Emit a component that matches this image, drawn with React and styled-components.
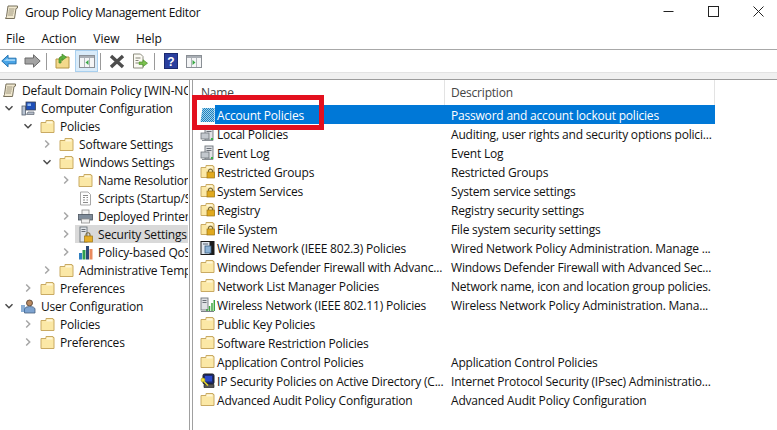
import React from 'react';
import styled, { createGlobalStyle } from 'styled-components';

const GlobalStyle = createGlobalStyle`
  html, body {
    margin: 0;
    padding: 0;
    background: #fff;
    overflow: hidden;
  }
  body {
    font-family: "Open Sans", "Noto Sans", sans-serif;
    font-size: 12px;
    color: #111;
  }
`;

const Window = styled.div`
  position: relative;
  width: 777px;
  height: 430px;
  display: flex;
  flex-direction: column;
  background: #fff;
  overflow: hidden;
`;

const TitleBar = styled.div`
  height: 25px;
  display: flex;
  align-items: center;
  padding-left: 4px;
  margin-right: -4px;
  gap: 6px;
`;

const Title = styled.span`
  font-size: 12px;
  letter-spacing: -0.32px;
  color: #111;
  flex: 1;
`;

const WindowControls = styled.div`
  display: flex;
  align-self: flex-start;
`;

const WindowControl = styled.div`
  width: 45px;
  height: 22px;
  display: flex;
  align-items: center;
  justify-content: center;
`;

const MenuBar = styled.div`
  height: 22px;
  padding-top: 2px;
  display: flex;
  align-items: center;
  padding-left: 6px;
  gap: 16.5px;
  border-bottom: 1px solid #a8a8a8;
  box-sizing: content-box;
`;

const MenuItem = styled.span`
  font-size: 12px;
  color: #111;
`;

const Toolbar = styled.div`
  height: 22px;
  display: flex;
  align-items: center;
`;

const ToolButton = styled.div`
  width: ${p => p.$w || 23}px;
  height: 22px;
  display: flex;
  align-items: center;
  justify-content: center;
  box-sizing: border-box;
  flex-shrink: 0;
  margin-left: ${p => p.$ml || 0}px;
  background: ${p => (p.$active ? '#d9ebf9' : 'transparent')};
  border: 1px solid ${p => (p.$active ? '#a9d0ef' : 'transparent')};
`;

const ToolSeparator = styled.div`
  width: 1px;
  height: 17px;
  background: #9a9a9a;
  flex-shrink: 0;
  margin-left: ${p => p.$ml || 0}px;
`;

const Band = styled.div`
  height: 6px;
  background: #f0f0f0;
  border-top: 1px solid #e3e3e3;
  border-bottom: 1px solid #9c9c9c;
  box-sizing: content-box;
`;

const Panes = styled.div`
  flex: 1;
  display: flex;
  min-height: 0;
`;

const TreePane = styled.div`
  width: 189px;
  flex-shrink: 0;
  border-right: 1px solid #a0a0a0;
  padding-top: 1px;
  overflow: hidden;
  box-sizing: content-box;
`;

const TreeRow = styled.div`
  height: 18px;
  display: flex;
  align-items: center;
  white-space: nowrap;
  width: 188px;
`;

const TreeIndent = styled.div`
  width: ${p => p.$level * 19 + 2}px;
  flex-shrink: 0;
  display: flex;
  justify-content: flex-end;
  align-items: center;
  padding-right: ${p => (p.$level > 0 ? 7 : 0)}px;
  box-sizing: border-box;
`;

const TreeLabel = styled.div`
  display: flex;
  align-items: center;
  gap: 5px;
  height: 18px;
  flex: 1;
  min-width: 0;
  margin-left: -3px;
  padding-left: 3px;
  background: ${p => (p.$selected ? '#d9d9d9' : 'transparent')};
  overflow: hidden;
`;

const TreeText = styled.span`
  font-size: 12px;
  letter-spacing: -0.2px;
  color: #111;
`;

const ListPane = styled.div`
  flex: 1;
  margin-left: 2px;
  border-left: 1px solid #a0a0a0;
  display: flex;
  flex-direction: column;
`;

const ListHeader = styled.div`
  height: 25px;
  display: grid;
  grid-template-columns: 252px 270px;
`;

const HeaderCell = styled.div`
  display: flex;
  align-items: center;
  padding-left: ${p => p.$pad}px;
  border-right: 1px solid #e3e3e3;
  font-size: 12px;
  letter-spacing: -0.2px;
  color: #444;
`;

const ListRow = styled.div`
  height: 19px;
  display: grid;
  grid-template-columns: 22px 230px 270px;
  align-items: center;
  white-space: nowrap;
`;

const IconCell = styled.div`
  height: 19px;
  display: flex;
  align-items: center;
  padding-left: 7px;
`;

const NameCell = styled.div`
  height: 19px;
  line-height: 21px;
  overflow: hidden;
  padding-left: 2px;
  font-size: 12px;
  letter-spacing: -0.2px;
  color: ${p => (p.$selected ? '#fff' : '#111')};
  background: ${p => (p.$selected ? '#0078d7' : 'transparent')};
`;

const DescCell = styled(NameCell)`
  padding-left: 6px;
  width: 270px;
  box-sizing: border-box;
`;

const Highlight = styled.div`
  position: absolute;
  left: 192px;
  top: 95px;
  width: 132px;
  height: 35px;
  box-sizing: border-box;
  border: 5px solid #e3101e;
  pointer-events: none;
`;

const Chevron = ({ open }) => (
  <svg width="10" height="10" viewBox="0 0 10 10">
    <path
      d={open ? 'M1.5 3.2 L5 6.7 L8.5 3.2' : 'M3.2 1.5 L6.7 5 L3.2 8.5'}
      fill="none"
      stroke={open ? '#4a4a4a' : '#a6a6a6'}
      strokeWidth="1.5"
    />
  </svg>
);

const Folder = ({ lock }) => (
  <svg width="15" height="15" viewBox="0 0 15 15" style={{ flexShrink: 0 }}>
    <path d="M1 3.5 H6 V1.5 H13 V2.5 H14 V13.5 H1 Z" fill="#fbe8a6" stroke="#c9aa63" strokeWidth="1" />
    <path d="M6.5 2.5 H12.5 V4.5 H6.5 Z" fill="#fff7d8" />
    {lock && (
      <g>
        <path d="M8.5 8 V6.5 A2.2 2.2 0 0 1 12.5 6.5 V8" fill="none" stroke="#7a6a3c" strokeWidth="1.2" />
        <rect x="7" y="8" width="7.5" height="6" fill="#e0a91e" stroke="#9a7414" strokeWidth="0.7" />
      </g>
    )}
  </svg>
);

const Scroll = () => (
  <svg width="15" height="15" viewBox="0 0 15 15" style={{ flexShrink: 0 }}>
    <path d="M4 1 H13.5 V3 L12 3.5 L10.5 13.5 H1.5 L2.5 11.5 Z" fill="#f0e8cf" stroke="#77705c" strokeWidth="1" />
    <path d="M5 4 H10.5 M4.6 6 H10 M4.3 8 H9.6 M4 10 H9" stroke="#8d866f" strokeWidth="0.8" />
  </svg>
);

const Computer = () => (
  <svg width="15" height="15" viewBox="0 0 15 15" style={{ flexShrink: 0 }}>
    <rect x="1" y="5" width="3.5" height="9" fill="#b9c4d2" stroke="#55606e" strokeWidth="0.8" />
    <rect x="5" y="1" width="9.5" height="8" fill="#1e4fb8" stroke="#3a4250" strokeWidth="0.8" />
    <rect x="6.5" y="2.5" width="3.5" height="2.5" fill="#8fb8f0" />
    <path d="M7 11 H13 V13.5 H5.5 Z" fill="#b4bcc8" stroke="#5c6470" strokeWidth="0.7" />
  </svg>
);

const User = () => (
  <svg width="15" height="15" viewBox="0 0 15 15" style={{ flexShrink: 0 }}>
    <circle cx="8.5" cy="4" r="3" fill="#b98a62" stroke="#4c3a2c" strokeWidth="0.8" />
    <path d="M3.5 14 V10 Q4 7.5 8.5 7.5 Q13.5 7.5 14 10 V14 Z" fill="#7da3d0" stroke="#46607f" strokeWidth="0.8" />
    <path d="M1 6 V13 M3 6 V13" stroke="#3f79b8" strokeWidth="1.2" />
  </svg>
);

const ScriptDoc = () => (
  <svg width="15" height="15" viewBox="0 0 15 15" style={{ flexShrink: 0 }}>
    <path d="M2.5 1 H10 L12.5 3.5 V14 H2.5 Z" fill="#fdfdfd" stroke="#a7a7a7" strokeWidth="1" />
    <path d="M5 4.5 H10 M5 6.5 H7 M8.5 6.5 H10 M5 9 H7 M8.5 9 H10 M5 11.5 H10" stroke="#7d7d7d" strokeWidth="0.9" />
  </svg>
);

const Printer = () => (
  <svg width="15" height="15" viewBox="0 0 15 15" style={{ flexShrink: 0 }}>
    <rect x="4" y="1" width="7" height="5" fill="#f4f4f4" stroke="#8c8c8c" strokeWidth="0.8" />
    <rect x="0.5" y="5.5" width="14" height="5.5" fill="#7f8c9a" stroke="#4c5560" strokeWidth="0.8" />
    <rect x="3.5" y="10" width="8" height="4" fill="#f0f0f0" stroke="#8c8c8c" strokeWidth="0.8" />
  </svg>
);

const SecurityServer = () => (
  <svg width="15" height="17" viewBox="0 0 15 17" style={{ flexShrink: 0 }}>
    <rect x="2" y="1" width="7" height="15" fill="#dfe3e8" stroke="#6d747c" strokeWidth="0.9" />
    <path d="M3.5 3.5 H7.5 M3.5 5.5 H7.5" stroke="#5c636b" strokeWidth="0.9" />
    <path d="M8 10 V8.8 A2 2 0 0 1 12 8.8 V10" fill="none" stroke="#7a6a3c" strokeWidth="1.1" />
    <rect x="6.5" y="10" width="8" height="6" fill="#e6b02a" stroke="#9a7414" strokeWidth="0.7" />
  </svg>
);

const Bars = () => (
  <svg width="16" height="15" viewBox="0 0 16 15" style={{ flexShrink: 0, marginRight: -1 }}>
    <rect x="1" y="8" width="3" height="6.5" fill="#2f7fc1" />
    <rect x="4.5" y="5" width="3" height="9.5" fill="#2e9e4f" />
    <rect x="8" y="1" width="3" height="13.5" fill="#2c4a78" />
    <rect x="11.5" y="4" width="3" height="10.5" fill="#e98a5e" />
  </svg>
);

const Checker = () => (
  <svg width="15" height="16" viewBox="0 0 15 16" style={{ flexShrink: 0 }}>
    <defs>
      <pattern id="chk" width="2" height="2" patternUnits="userSpaceOnUse">
        <rect width="2" height="2" fill="#1e7fc0" />
        <rect width="1" height="1" fill="#9fd4ea" />
        <rect x="1" y="1" width="1" height="1" fill="#9fd4ea" />
      </pattern>
    </defs>
    <path d="M2.5 1 H14.5 V15 H0.5 Z" fill="url(#chk)" />
  </svg>
);

const Server = () => (
  <svg width="15" height="16" viewBox="0 0 15 16" style={{ flexShrink: 0 }}>
    <rect x="5" y="1" width="8" height="13" fill="#dfe1e4" stroke="#6f757c" strokeWidth="0.9" />
    <path d="M6.5 3.5 H11.5 M6.5 5.5 H11.5" stroke="#5c636b" strokeWidth="0.9" />
    <rect x="1" y="7" width="8" height="6" fill="#c3c8ce" stroke="#6f757c" strokeWidth="0.8" />
    <rect x="11" y="12" width="2" height="2" fill="#39b54a" />
    <path d="M2 14.5 H13" stroke="#8a8f95" strokeWidth="1" />
  </svg>
);

const WiredNet = () => (
  <svg width="15" height="16" viewBox="0 0 15 16" style={{ flexShrink: 0 }}>
    <rect x="0.5" y="1" width="14" height="14" fill="#1b1b1b" />
    <rect x="1.5" y="2" width="8" height="12" fill="#dfe6ee" />
    <rect x="5" y="6" width="6" height="7" fill="#8db3d6" stroke="#3c5f80" strokeWidth="0.8" />
    <path d="M3 4 H8" stroke="#5a6570" strokeWidth="1" />
  </svg>
);

const WirelessNet = () => (
  <svg width="15" height="16" viewBox="0 0 15 16" style={{ flexShrink: 0 }}>
    <rect x="1" y="1" width="7" height="12" fill="#dfe1e4" stroke="#6f757c" strokeWidth="0.9" />
    <path d="M2.5 3.5 H6.5 M2.5 5.5 H6.5" stroke="#5c636b" strokeWidth="0.9" />
    <path d="M7 14 V12 M9.5 14 V9 M12 14 V6 M14.3 14 V3" stroke="#3fa53f" strokeWidth="1.5" />
    <path d="M1 14.5 H14" stroke="#7d8288" strokeWidth="1" />
  </svg>
);

const IpSec = () => (
  <svg width="15" height="16" viewBox="0 0 15 16" style={{ flexShrink: 0 }}>
    <rect x="3" y="1" width="11" height="10" rx="1.5" fill="#1d2a6b" stroke="#1a1a1a" strokeWidth="1" />
    <rect x="5" y="3" width="7" height="5.5" fill="#2b49c9" />
    <path d="M4 11.5 H14 V14.5 H4 Z" fill="#555" stroke="#222" strokeWidth="0.7" />
    <circle cx="3" cy="7" r="2" fill="#f2e23c" stroke="#a89a18" strokeWidth="0.6" />
    <path d="M4 8.5 L8 12.5" stroke="#e6d52e" strokeWidth="1.6" />
  </svg>
);

const BackArrow = () => (
  <svg width="17" height="14" viewBox="0 0 17 14">
    <path d="M0.8 7 L7.5 0.8 V4 H16 V10 H7.5 V13.2 Z" fill="#49a4e6" stroke="#1f6fae" strokeWidth="1" />
    <path d="M3 7 L7 3.8 V5.2 H15 V7 Z" fill="#9ed3f6" />
  </svg>
);

const ForwardArrow = () => (
  <svg width="17" height="14" viewBox="0 0 17 14">
    <path d="M16.2 7 L9.5 0.8 V4 H1 V10 H9.5 V13.2 Z" fill="#a3a3a3" stroke="#6a6a6a" strokeWidth="1" />
  </svg>
);

const UpFolder = () => (
  <svg width="15" height="16" viewBox="0 0 15 16">
    <path d="M1 6 H5 V4 H14 V15 H1 Z" fill="#f3d98b" stroke="#b59545" strokeWidth="1" />
    <path d="M4 10 L4 6 Q4 4 7 3.5 V1 L11.5 4.2 L7 7.5 V5.5 Q6 6 6 10 Z" fill="#5db13f" stroke="#3f8a2a" strokeWidth="0.7" />
  </svg>
);

const PanelIcon = ({ color, right }) => (
  <svg width="16" height="13" viewBox="0 0 16 13">
    <rect x="0.5" y="0.5" width="15" height="12" fill="#f4f5f6" stroke="#8a8f95" />
    <rect x="1" y="1" width="14" height="2" fill="#a9aeb4" />
    <path d="M5.5 3 V12 M10.5 3 V12" stroke="#b0b4b9" strokeWidth="1" />
    {right ? (
      <path d="M6.5 5 L9.5 7.5 L6.5 10 Z" fill={color} />
    ) : (
      <path d="M9.5 5 L6.5 7.5 L9.5 10 Z" fill={color} />
    )}
  </svg>
);

const DeleteX = () => (
  <svg width="16" height="15" viewBox="0 0 16 15">
    <path d="M2 2 L14 13 M14 2 L2 13" stroke="#4d4d4d" strokeWidth="3.4" />
  </svg>
);

const ExportDoc = () => (
  <svg width="16" height="16" viewBox="0 0 16 16">
    <path d="M1.5 1 H8.5 L11 3.5 V15 H1.5 Z" fill="#fbfaf3" stroke="#8e8e80" strokeWidth="1" />
    <path d="M3.5 5 H8.5 M3.5 7.5 H6.5 M3.5 10 H6.5" stroke="#77776a" strokeWidth="0.9" />
    <path d="M7 9 H11 V6.8 L15.5 10.2 L11 13.6 V11.4 H7 Z" fill="#7cc24e" stroke="#4a8f2c" strokeWidth="0.7" />
  </svg>
);

const Help = () => (
  <svg width="14" height="16" viewBox="0 0 14 16">
    <rect x="0.5" y="0.5" width="13" height="15" fill="#2a3f9e" stroke="#1b2a70" />
    <text x="7" y="12.5" textAnchor="middle" fontSize="12" fontWeight="700" fontFamily="Liberation Sans, sans-serif" fill="#fff">?</text>
  </svg>
);

const treeRows = [
  { level: 0, icon: <Scroll />, text: 'Default Domain Policy [WIN-NC' },
  { level: 1, chevron: 'open', icon: <Computer />, text: 'Computer Configuration' },
  { level: 2, chevron: 'open', icon: <Folder />, text: 'Policies' },
  { level: 3, chevron: 'closed', icon: <Folder />, text: 'Software Settings' },
  { level: 3, chevron: 'open', icon: <Folder />, text: 'Windows Settings' },
  { level: 4, chevron: 'closed', icon: <Folder />, text: 'Name Resolution Policy' },
  { level: 4, icon: <ScriptDoc />, text: 'Scripts (Startup/Shutdown)' },
  { level: 4, chevron: 'closed', icon: <Printer />, text: 'Deployed Printers' },
  { level: 4, chevron: 'closed', icon: <SecurityServer />, text: 'Security Settings', selected: true },
  { level: 4, chevron: 'closed', icon: <Bars />, text: 'Policy-based QoS' },
  { level: 3, chevron: 'closed', icon: <Folder />, text: 'Administrative Templates' },
  { level: 2, chevron: 'closed', icon: <Folder />, text: 'Preferences' },
  { level: 1, chevron: 'open', icon: <User />, text: 'User Configuration' },
  { level: 2, chevron: 'closed', icon: <Folder />, text: 'Policies' },
  { level: 2, chevron: 'closed', icon: <Folder />, text: 'Preferences' },
];

const listRows = [
  { icon: <Checker />, name: 'Account Policies', desc: 'Password and account lockout policies', selected: true },
  { icon: <Server />, name: 'Local Policies', desc: 'Auditing, user rights and security options polici...' },
  { icon: <Server />, name: 'Event Log', desc: 'Event Log' },
  { icon: <Folder lock />, name: 'Restricted Groups', desc: 'Restricted Groups' },
  { icon: <Folder lock />, name: 'System Services', desc: 'System service settings' },
  { icon: <Folder lock />, name: 'Registry', desc: 'Registry security settings' },
  { icon: <Folder lock />, name: 'File System', desc: 'File system security settings' },
  { icon: <WiredNet />, name: 'Wired Network (IEEE 802.3) Policies', desc: 'Wired Network Policy Administration. Manage ...' },
  { icon: <Folder />, name: 'Windows Defender Firewall with Advanc...', desc: 'Windows Defender Firewall with Advanced Sec...' },
  { icon: <Folder />, name: 'Network List Manager Policies', desc: 'Network name, icon and location group policies.' },
  { icon: <WirelessNet />, name: 'Wireless Network (IEEE 802.11) Policies', desc: 'Wireless Network Policy Administration. Mana...' },
  { icon: <Folder />, name: 'Public Key Policies', desc: '' },
  { icon: <Folder />, name: 'Software Restriction Policies', desc: '' },
  { icon: <Folder />, name: 'Application Control Policies', desc: 'Application Control Policies' },
  { icon: <IpSec />, name: 'IP Security Policies on Active Directory (C...', desc: 'Internet Protocol Security (IPsec) Administratio...' },
  { icon: <Folder />, name: 'Advanced Audit Policy Configuration', desc: 'Advanced Audit Policy Configuration' },
];

export default function App() {
  return (
    <Window>
      <GlobalStyle />
      <TitleBar>
        <Scroll />
        <Title>Group Policy Management Editor</Title>
        <WindowControls>
          <WindowControl>
            <svg width="11" height="11" viewBox="0 0 11 11"><path d="M0.5 5.5 H10.5" stroke="#222" /></svg>
          </WindowControl>
          <WindowControl>
            <svg width="11" height="11" viewBox="0 0 11 11"><rect x="0.5" y="0.5" width="10" height="10" fill="none" stroke="#222" /></svg>
          </WindowControl>
          <WindowControl>
            <svg width="11" height="11" viewBox="0 0 11 11"><path d="M0.5 0.5 L10.5 10.5 M10.5 0.5 L0.5 10.5" stroke="#222" /></svg>
          </WindowControl>
        </WindowControls>
      </TitleBar>
      <MenuBar>
        <MenuItem>File</MenuItem>
        <MenuItem>Action</MenuItem>
        <MenuItem>View</MenuItem>
        <MenuItem>Help</MenuItem>
      </MenuBar>
      <Toolbar>
        <ToolButton $w={18}><BackArrow /></ToolButton>
        <ToolButton $w={28}><ForwardArrow /></ToolButton>
        <ToolSeparator />
        <ToolButton $w={25} $ml={3}><UpFolder /></ToolButton>
        <ToolButton $active><PanelIcon color="#3aa845" /></ToolButton>
        <ToolSeparator $ml={2} />
        <ToolButton $w={24} $ml={4}><DeleteX /></ToolButton>
        <ToolButton $w={21}><ExportDoc /></ToolButton>
        <ToolSeparator $ml={4} />
        <ToolButton $ml={4}><Help /></ToolButton>
        <ToolButton $w={24}><PanelIcon color="#3aa845" right /></ToolButton>
      </Toolbar>
      <Band />
      <Panes>
        <TreePane>
          {treeRows.map((row, i) => (
            <TreeRow key={i}>
              <TreeIndent $level={row.level}>
                {row.chevron && <Chevron open={row.chevron === 'open'} />}
              </TreeIndent>
              <TreeLabel $selected={row.selected}>
                {row.icon}
                <TreeText>{row.text}</TreeText>
              </TreeLabel>
            </TreeRow>
          ))}
        </TreePane>
        <ListPane>
          <ListHeader>
            <HeaderCell $pad={8}>Name</HeaderCell>
            <HeaderCell $pad={6}>Description</HeaderCell>
          </ListHeader>
          {listRows.map((row, i) => (
            <ListRow key={i}>
              <IconCell>{row.icon}</IconCell>
              <NameCell $selected={row.selected}>{row.name}</NameCell>
              <DescCell $selected={row.selected}>{row.desc}</DescCell>
            </ListRow>
          ))}
        </ListPane>
      </Panes>
      <Highlight />
    </Window>
  );
}
